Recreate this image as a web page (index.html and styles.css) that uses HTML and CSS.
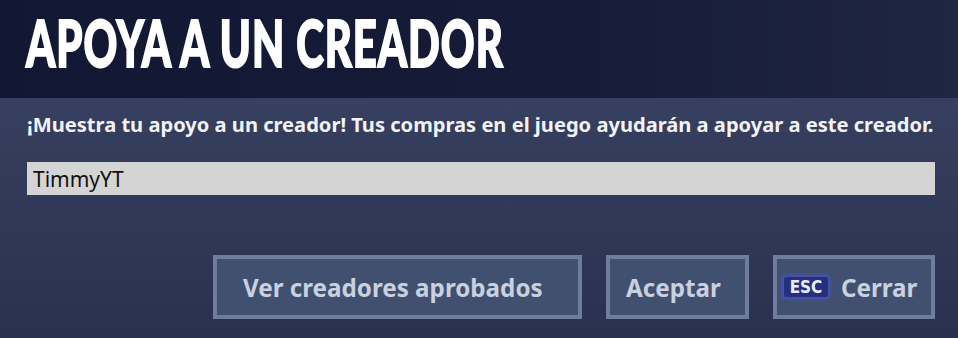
FILE: index.html
```html
<!DOCTYPE html>
<html lang="es">
<head>
    <meta charset="UTF-8">
    <meta name="viewport" content="width=device-width, initial-scale=1.0">
    <title>Apoya a un creador</title>
    <link rel="stylesheet" href="styles.css">
</head>
<body>
    <!-- Title band -->
    <header class="top">
        <h1 class="title">APOYA A UN CREADOR</h1>
    </header>

    <!-- Dialog body -->
    <main class="panel">
        <p class="lead">¡Muestra tu apoyo a un creador! Tus compras en el juego ayudarán a apoyar a este creador.</p>
        <input class="field" type="text" value="TimmyYT">

        <div class="actions">
            <button class="btn btn-wide">Ver creadores aprobados</button>
            <button class="btn btn-ok">Aceptar</button>
            <button class="btn btn-close"><span class="key">ESC</span>Cerrar</button>
        </div>
    </main>
</body>
</html>
```

FILE: styles.css
```css
html, body {
    margin: 0;
    height: 100%;
}
body {
    font-family: "Noto Sans", "Open Sans", sans-serif;
    background: linear-gradient(180deg, #3e4768 0%, #343c5c 45%, #2a3150 100%);
    display: flex;
    flex-direction: column;
    overflow: hidden;
}
.top {
    height: 98px;
    background: linear-gradient(90deg, #121833 0%, #161c38 60%, #1f2642 100%);
    padding-left: 26px;
    box-sizing: border-box;
    display: flex;
    align-items: center;
}
.title {
    margin: 0 0 14px;
    font-family: Lato, Roboto, "Liberation Sans", sans-serif;
    font-weight: 900;
    font-size: 65px;
    line-height: 1;
    color: #ffffff;
    -webkit-text-stroke: 2px #ffffff;
    letter-spacing: 1.5px;
    transform: scaleX(0.643);
    transform-origin: left center;
    white-space: nowrap;
}
.panel {
    flex: 1;
    padding: 0 23px 0 27px;
    display: flex;
    flex-direction: column;
}
.lead {
    margin: 13px 0 0;
    font-size: 20.1px;
    font-weight: 700;
    line-height: 28px;
    color: #f2f3f8;
    white-space: nowrap;
}
.field {
    margin-top: 23px;
    height: 33px;
    border: none;
    background-color: #d4d4d4;
    font-family: "Noto Sans", "Open Sans", sans-serif;
    font-size: 21px;
    color: #111111;
    padding: 0 6px;
    box-sizing: border-box;
    outline: none;
}
.actions {
    margin-top: 60px;
    display: flex;
    justify-content: flex-end;
    gap: 24px;
}
.btn {
    height: 64px;
    padding: 0;
    border: 4px solid #6f7c9c;
    background-color: #41506f;
    color: #c9d0e0;
    font-family: "Noto Sans", "Open Sans", sans-serif;
    font-size: 24.2px;
    font-weight: 700;
    box-sizing: border-box;
    display: flex;
    align-items: center;
    white-space: nowrap;
    cursor: pointer;
}
.btn-wide {
    width: 369px;
    padding-left: 26px;
}
.btn-ok {
    width: 143px;
    padding-left: 16px;
}
.btn-close {
    width: 162px;
    padding-left: 5px;
}
.key {
    display: inline-block;
    font-family: "DejaVu Sans Condensed", "Liberation Sans Narrow", sans-serif;
    font-size: 17px;
    font-weight: 700;
    color: #e8ecff;
    background-color: #26307a;
    border: 2px solid #4550b0;
    border-radius: 4px;
    width: 48px;
    height: 24px;
    line-height: 20px;
    text-align: center;
    box-sizing: border-box;
    margin-right: 11px;
    box-shadow: 0 0 3px #4a56c0;
}
```
